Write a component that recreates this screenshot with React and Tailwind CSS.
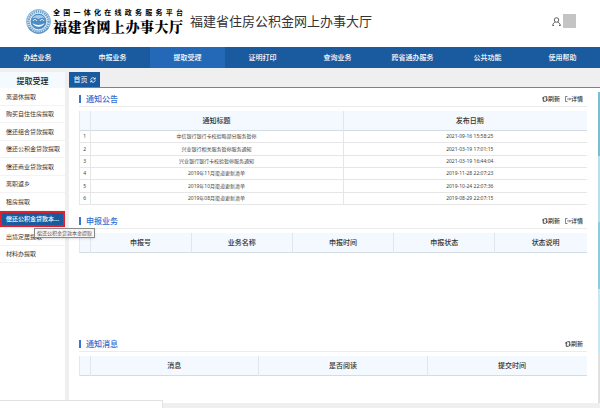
import React, { useState } from "react";

const menu = [
  "办结业务",
  "申报业务",
  "提取受理",
  "证明打印",
  "查询业务",
  "跨省通办服务",
  "公共功能",
  "使用帮助",
];

const tramites = [
  "离退休提取",
  "购买自住住房提取",
  "偿还组合贷款提取",
  "偿还公积金贷款提取",
  "偿还商业贷款提取",
  "离职返乡",
  "租房提取",
  "偿还公积金贷款本金提取",
  "出境定居提取",
  "材料办提取",
];

const avisos = [
  ["中信银行银行卡校验略部分服务暂停", "2021-09-16 15:58:25"],
  ["兴业银行相关服务暂停服务通知", "2021-03-19 17:01:15"],
  ["兴业银行银行卡校验暂停服务通知", "2021-03-19 16:44:04"],
  ["2019年11月渠道更新清单", "2019-11-28 22:07:23"],
  ["2019年10月渠道更新清单", "2019-10-24 22:07:36"],
  ["2019年08月渠道更新清单", "2019-08-29 22:07:15"],
];

const recortar = (texto) => (texto.length > 9 ? `${texto.slice(0, 8)}...` : texto);

const Logo = () => (
  <svg viewBox="0 0 50 50" className="size-[25px] shrink-0" aria-hidden="true">
    <circle cx="25" cy="25" r="24" fill="#d6e6f3" stroke="#6a9fcc" strokeWidth="1.5" />
    <circle
      cx="25"
      cy="25"
      r="20"
      fill="none"
      stroke="#6a9fcc"
      strokeWidth="5"
      strokeDasharray="2.6 1.8"
    />
    <circle cx="25" cy="25" r="16.5" fill="#4a8cc6" stroke="#e6f0f8" strokeWidth="1.5" />
    <path d="M12 19c3-5 8-7 13-7s10 2 13 7c-4-2-8-2-13 1-5-3-9-3-13-1z" fill="#a9cbe8" />
    <path d="M14 24c2-4 6-4 8 0M28 24c2-4 6-4 8 0" fill="none" stroke="#fff" strokeWidth="2" />
    <path d="M13 28c4 10 20 10 24 0-5 5-19 5-24 0z" fill="#fff" />
    <path d="M5 37c5 7 12 11 20 11s15-4 20-11" fill="none" stroke="#5b93c4" strokeWidth="2.5" />
  </svg>
);

const IconoUsuario = () => (
  <svg
    viewBox="0 0 18 18"
    className="size-[9px]"
    fill="none"
    stroke="#444"
    strokeWidth="1.7"
    aria-hidden="true"
  >
    <circle cx="9" cy="6" r="4.5" />
    <path d="M1.5 17c.3-4 2.4-6 5-6.7M16.5 17c-.3-4-2.4-6-5-6.7M1 17h3M14 17h3" />
  </svg>
);

const IconoRefrescar = () => (
  <svg viewBox="0 0 12 12" className="size-[6px]" fill="none" stroke="currentColor" strokeWidth="1.8" aria-hidden="true">
    <path d="M4.5 1.5h5v6M7.5 10.500h-5v-6" />
    <path d="M0 5l2.500-4L5 5zM7 7l2.500 4L12 7z" fill="currentColor" stroke="none" />
  </svg>
);

const IconoDetalle = () => (
  <svg viewBox="0 0 12 12" className="size-[6px]" fill="none" stroke="currentColor" strokeWidth="1.2" aria-hidden="true">
    <path d="M5 1H1v10h4M4 6h7M8.500 3.500L11 6 8.500 8.500" />
  </svg>
);

const Panel = ({ titulo, detalle, className, children }) => (
  <section className={className}>
    <div className="flex h-[15px] items-center border-b border-[#ececec] pr-1">
      <h2 className="flex items-center gap-[5px] text-[8px] leading-[12px] font-medium text-[#2f6fd0]">
        <span className="h-2 w-[2px] bg-[#3a74cc]" />
        {titulo}
      </h2>
      <div className="ml-auto flex gap-[5px] text-[6px] leading-[8px] font-medium text-[#333]">
        <button type="button" className="flex items-center">
          <IconoRefrescar />
          刷新
        </button>
        {detalle && (
          <button type="button" className="flex items-center">
            <IconoDetalle />
            详情
          </button>
        )}
      </div>
    </div>
    <div className="mt-1 overflow-hidden border-l border-[#e4e8ec]">{children}</div>
  </section>
);

// la tabla es un poco mas ancha que el panel y la ultima columna se recorta
const Tabla = ({ columnas, filas = [] }) => (
  <table className="w-[calc(100%+9px)] table-fixed border-collapse text-center">
    <thead>
      <tr className="h-[19px] border-b border-[#d3dce4] bg-[#f3f9fe]">
        <th className="w-[10px] p-0" />
        {columnas.map((columna) => (
          <th
            key={columna}
            className="border-l border-[#dfe6ec] p-0 text-[7px] leading-[10px] font-medium text-[#333]"
          >
            {columna}
          </th>
        ))}
      </tr>
    </thead>
    <tbody className="font-['Noto_Sans','Noto_Sans_CJK_SC',sans-serif]">
      {filas.map(([titulo, fecha], i) => (
        <tr
          key={titulo}
          className="h-[12px] border-b border-[#e6e6e6] text-[5px] leading-[8px] text-[#444] nth-[3n+2]:h-[13px]"
        >
          <td className="p-0">{i + 1}</td>
          <td className="border-l border-[#e6e6e6] p-0">{titulo}</td>
          <td className="border-l border-[#e6e6e6] p-0">{fecha}</td>
        </tr>
      ))}
    </tbody>
  </table>
);

const App = () => {
  const [seccion, guardarSeccion] = useState("提取受理");
  const [tramite, guardarTramite] = useState("偿还公积金贷款本金提取");

  return (
    <div
      lang="zh-CN"
      className="relative flex min-h-screen flex-col bg-[#efefef] font-['Noto_Sans_CJK_SC',sans-serif]"
    >
      <header className="flex h-[47px] items-center bg-white pr-6 pb-[5px] pl-[26px]">
        <Logo />
        <div className="ml-[2px] w-[130px] pt-[2px] text-black">
          <p className="text-[7px] leading-[8px] font-bold [text-align-last:justify]">
            全国一体化在线政务服务平台
          </p>
          <p className="text-[14px] leading-[20px] font-black [text-align-last:justify] font-['Noto_Serif_CJK_SC','Noto_Sans_CJK_SC',serif]">
            福建省网上办事大厅
          </p>
        </div>
        <h1 className="ml-[7px] text-[13px] leading-[18px] text-[#333]">
          福建省住房公积金网上办事大厅
        </h1>
        <div className="ml-auto flex items-center gap-[2px]">
          <IconoUsuario />
          <span className="h-[14px] w-[13px] bg-[#c4c4c4]" />
        </div>
      </header>

      <nav className="grid h-[21px] grid-cols-8 bg-[#1a5a9e]">
        {menu.map((item) => (
          <button
            key={item}
            type="button"
            onClick={() => guardarSeccion(item)}
            className={
              item === seccion
                ? "bg-[#2468b8] text-[7px] font-medium text-white"
                : "text-[7px] font-medium text-white"
            }
          >
            {item}
          </button>
        ))}
      </nav>

      <div className="flex flex-1">
        <aside className="mt-1 w-[65px] shrink-0 bg-white">
          <h2 className="h-4 bg-[#f5faff] text-center text-[8px] leading-[17px] font-medium text-[#222]">
            提取受理
          </h2>
          <ul className="grid h-[175px] auto-rows-fr grid-cols-1">
            {tramites.map((item) => (
              <li key={item} className="flex min-w-0 border-b border-[#f3f3f3]">
                <button
                  type="button"
                  title={item}
                  onClick={() => guardarTramite(item)}
                  className={
                    item === tramite
                      ? "w-full border-2 border-[#e0202c] bg-[#1a5a9e] pl-1 text-left text-[6px] leading-[12px] font-medium whitespace-nowrap text-white"
                      : "w-full pl-[6px] text-left text-[6px] whitespace-nowrap text-[#333]"
                  }
                >
                  {recortar(item)}
                </button>
              </li>
            ))}
          </ul>
        </aside>

        <main className="mb-[5px] ml-1 flex min-w-0 flex-1 flex-col">
          <div className="mt-1 flex h-4 border-b border-[#5c88c0]">
            <button
              type="button"
              className="flex w-[31px] items-center justify-center gap-[2px] bg-[#1a5a9e] text-[7px] text-white"
            >
              首页
              <svg viewBox="0 0 12 12" className="size-[6px]" fill="none" stroke="currentColor" strokeWidth="1.6" aria-hidden="true">
                <path d="M1.5 5.500a4.500 4.500 0 0 1 8.500-1.500M10.500 6.500a4.500 4.500 0 0 1-8.500 1.500M10.500 1v3.300H7.200M1.500 11V7.700h3.300" />
              </svg>
            </button>
          </div>
          <div className="flex flex-1 bg-white pt-1">
            <div className="min-w-0 flex-1 pr-[11px] pl-[10px]">
              <Panel titulo="通知公告" detalle className="min-h-[122px]">
                <Tabla columnas={["通知标题", "发布日期"]} filas={avisos} />
              </Panel>
              <Panel titulo="申报业务" detalle className="min-h-[123px]">
                <Tabla columnas={["申报号", "业务名称", "申报时间", "申报状态", "状态说明"]} />
              </Panel>
              <Panel titulo="通知消息">
                <Tabla columnas={["消息", "是否阅读", "提交时间"]} />
              </Panel>
            </div>
            <div className="flex w-[2px] flex-col">
              <span className="h-[64px] bg-[#7dbdd6]" />
              <span className="h-[66px] bg-[#b5e0ee]" />
              <span className="h-[67px] bg-[#8fcbe0]" />
              <span className="h-[64px] bg-[#c5e9f2]" />
              <span className="flex-1 bg-[#e0e0e0]" />
            </div>
          </div>
        </main>
      </div>

      <div
        role="tooltip"
        className="absolute top-[228px] left-[34px] border border-[#8a8a8a] bg-[#f6f6f6] px-[2px] text-[5px] leading-[8px] text-[#555] shadow-sm"
      >
        偿还公积金贷款本金提取
      </div>

      {/* barra de estado */}
      <div className="absolute bottom-0 left-0 h-2 w-[163px] border-t border-r border-[#e2e2e2] bg-white" />
    </div>
  );
};

export default App;
